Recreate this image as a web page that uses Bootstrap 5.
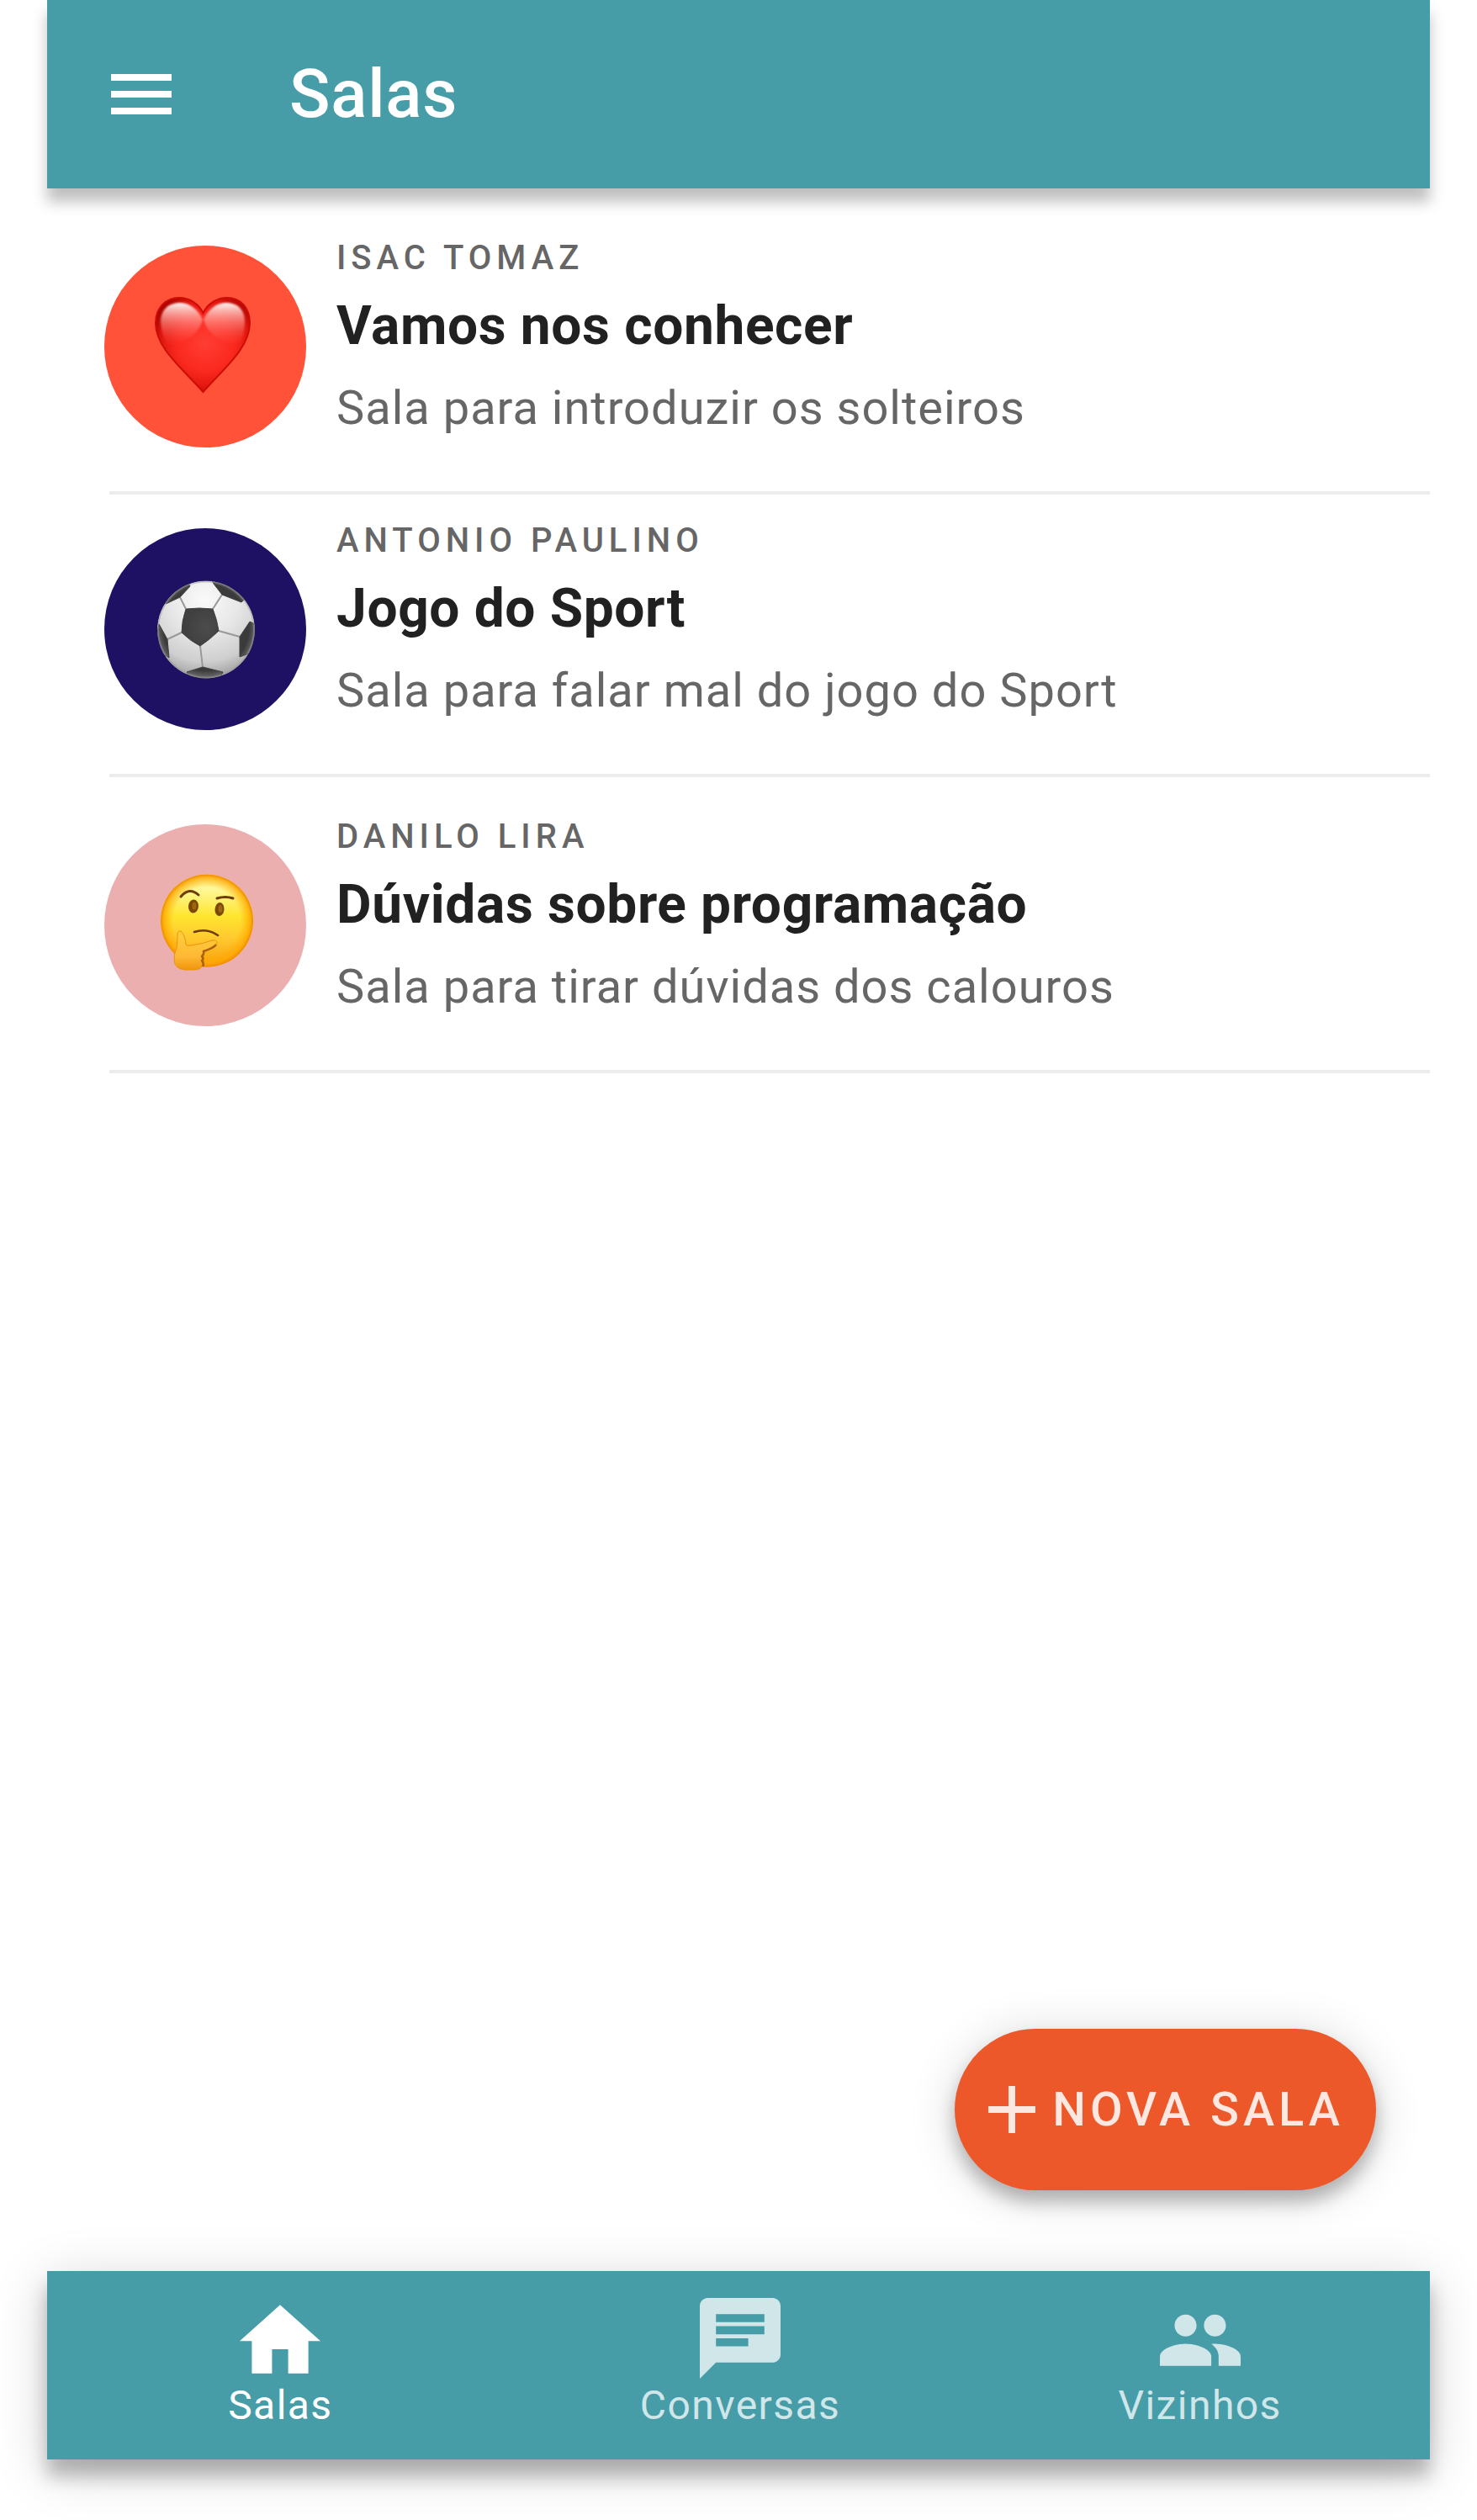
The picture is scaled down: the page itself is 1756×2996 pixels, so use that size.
<!DOCTYPE html>
<html lang="pt-BR">
<head>
<meta charset="utf-8">
<meta name="viewport" content="width=device-width, initial-scale=1">
<title>Salas</title>
<link href="https://cdn.jsdelivr.net/npm/bootstrap@5.3.0/dist/css/bootstrap.min.css" rel="stylesheet">
<style>
  :root { --teal: #469da8; --coral: #ec5829; }
  body { font-family: Roboto, "Noto Sans", sans-serif; padding: 0 56px 72px; color: #212121; background: #fff; }
  svg { display: block; }
  .app-header { min-height: 224px; padding-left: 52px; background: var(--teal); box-shadow: 0 16px 16px rgba(0, 0, 0, .25); }
  .menu-button { width: 120px; height: 120px; }
  .app-title { margin-left: 116px; font-size: 80px; line-height: 96px; font-weight: 500; letter-spacing: .01em; }
  .room-list { padding-top: 28px; }
  .room { gap: 36px; padding: 32px 0 52px 68px; }
  .room-spaced { padding-top: 48px; }
  .avatar { width: 240px; height: 240px; margin-top: 8px; overflow: hidden; }
  .avatar-heart { background: #ff5238; }
  .avatar-ball { background: #1e1163; }
  .avatar-think { background: #ebafb0; }
  .room-text { gap: 14px; }
  .room-owner { font-size: 40px; line-height: 46px; font-weight: 500; letter-spacing: 6px; color: #666; }
  .room-name { font-size: 64px; line-height: 88px; font-weight: 700; letter-spacing: .01em; }
  .room-about { font-size: 56px; line-height: 78px; letter-spacing: 1px; color: #666; }
  .divider { margin: 0 0 0 74px; border-top: 4px solid #ececec; opacity: 1; }
  .new-room { height: 192px; margin: 0 64px 96px 0; padding: 0 38px 0 20px; background: var(--coral); color: #fde8e1; font-size: 56px; font-weight: 500; letter-spacing: 5px; box-shadow: 0 14px 20px rgba(0, 0, 0, .24), 0 6px 56px rgba(0, 0, 0, .16); }
  .new-room:hover { background: var(--coral); color: #fff; }
  .tab-bar { min-height: 224px; padding-left: 4px; background: var(--teal); box-shadow: 0 20px 20px rgba(0, 0, 0, .24), 0 12px 60px rgba(0, 0, 0, .18); }
  .tab { flex: 1 1 0; padding: 32px 0; color: #d0e6e9; font-size: 48px; line-height: 64px; letter-spacing: .03em; }
  .tab.active { color: #fff; }
</style>
</head>
<body class="d-flex flex-column min-vh-100">

<header class="app-header d-flex align-items-center text-white">
  <button type="button" class="menu-button btn p-0 border-0 text-white d-flex align-items-center justify-content-center" aria-label="Abrir menu">
    <svg width="72" height="48" viewBox="0 0 72 48" fill="currentColor" aria-hidden="true"><path d="M0 0h72v8H0zM0 20h72v8H0zM0 40h72v8H0z"/></svg>
  </button>
  <h1 class="app-title mb-0">Salas</h1>
</header>

<main class="flex-grow-1 d-flex flex-column">
  <div class="room-list">
    <article class="room d-flex">
      <div class="avatar avatar-heart rounded-circle flex-shrink-0">
        <svg width="240" height="240" viewBox="0 0 240 240" role="img" aria-label="Coração">
          <defs>
            <radialGradient id="heartBody" gradientUnits="userSpaceOnUse" cx="120" cy="116" r="66">
              <stop offset="0" stop-color="#ff3d33"/><stop offset=".5" stop-color="#fb2a20"/><stop offset=".8" stop-color="#e0160e"/><stop offset="1" stop-color="#a90500"/>
            </radialGradient>
            <linearGradient id="heartShine" x1="0" y1="0" x2="0" y2="1">
              <stop offset="0" stop-color="#fff" stop-opacity=".95"/><stop offset=".25" stop-color="#ffc6c0" stop-opacity=".75"/><stop offset="1" stop-color="#ff4b3f" stop-opacity="0"/>
            </linearGradient>
            <filter id="soften" x="-20%" y="-20%" width="140%" height="140%"><feGaussianBlur stdDeviation="1"/></filter>
          </defs>
          <path d="M117.500 80C112 69 101 62 89 62C73 62 61 74 61 92C61 122 94 147 117.500 174C141 147 173 122 173 92C173 74 162 62 146 62C134 62 123 69 117.500 80Z" fill="url(#heartBody)" stroke="#cc0c05" stroke-width="2"/>
          <path d="M117 88C111 75 101 68 90 68C76 68 67 77 67 91Q68 108 77 120Q112 110 117 88Z" fill="url(#heartShine)" filter="url(#soften)"/>
          <path d="M118 88C124 75 134 68 145 68C159 68 167 77 167 91Q167 108 158 120Q123 110 118 88Z" fill="url(#heartShine)" filter="url(#soften)"/>
        </svg>
      </div>
      <div class="room-text d-flex flex-column">
        <p class="room-owner mb-0">ISAC TOMAZ</p>
        <h2 class="room-name mb-0">Vamos nos conhecer</h2>
        <p class="room-about mb-0">Sala para introduzir os solteiros</p>
      </div>
    </article>
    <hr class="divider">

    <article class="room d-flex">
      <div class="avatar avatar-ball rounded-circle flex-shrink-0">
        <svg width="240" height="240" viewBox="0 0 240 240" role="img" aria-label="Bola de futebol">
          <defs>
            <radialGradient id="ballBody" gradientUnits="userSpaceOnUse" cx="119" cy="85" r="98">
              <stop offset="0" stop-color="#fafafa"/><stop offset=".4" stop-color="#e8e8e8"/><stop offset=".75" stop-color="#cfcfcf"/><stop offset="1" stop-color="#969696"/>
            </radialGradient>
            <radialGradient id="patch" gradientUnits="userSpaceOnUse" cx="121" cy="118" r="60">
              <stop offset="0" stop-color="#4c4c4c"/><stop offset=".4" stop-color="#404040"/><stop offset=".85" stop-color="#3a3a3a"/><stop offset="1" stop-color="#6d6d6d"/>
            </radialGradient>
            <clipPath id="ballClip"><circle cx="121" cy="120.500" r="58"/></clipPath>
          </defs>
          <g clip-path="url(#ballClip)">
            <circle cx="121" cy="120.500" r="58" fill="url(#ballBody)"/>
            <g fill="none" stroke="#999" stroke-width="2">
              <path d="M97 96L90 82M129 96L140 79M136 122L161 129M114 140L117 165M92 124L75 132"/>
            </g>
            <g fill="url(#patch)" stroke="#404040" stroke-width="1" stroke-linejoin="round">
              <path d="M97 96Q113 94 129 96Q134 108 136 122Q126 132 114 140Q102 134 92 124Q92 110 97 96Z"/>
              <path d="M102 69L90 82L73 90L66 70L95 54Z"/>
              <path d="M130 66L140 79L163 88L176 76L144 54L127 60Z"/>
              <path d="M173 111L161 129V153L180 146L185 117Z"/>
              <path d="M98 171L117 165L141 171L134 186H106Z"/>
              <path d="M65 114L75 132L77 154L59 144Z"/>
            </g>
            <circle cx="121" cy="120.500" r="57" fill="none" stroke="#999" stroke-opacity=".5" stroke-width="2"/>
          </g>
        </svg>
      </div>
      <div class="room-text d-flex flex-column">
        <p class="room-owner mb-0">ANTONIO PAULINO</p>
        <h2 class="room-name mb-0">Jogo do Sport</h2>
        <p class="room-about mb-0">Sala para falar mal do jogo do Sport</p>
      </div>
    </article>
    <hr class="divider">

    <article class="room room-spaced d-flex">
      <div class="avatar avatar-think rounded-circle flex-shrink-0">
        <svg width="240" height="240" viewBox="0 0 240 240" role="img" aria-label="Rosto pensativo">
          <defs>
            <linearGradient id="faceBody" x1="0" y1="0" x2="0" y2="1">
              <stop offset="0" stop-color="#fff7a0"/><stop offset=".15" stop-color="#fff89a"/><stop offset=".45" stop-color="#ffe530"/><stop offset=".7" stop-color="#ffc82e"/><stop offset="1" stop-color="#f79c0c"/>
            </linearGradient>
            <radialGradient id="faceRim" cx=".5" cy=".5" r=".5">
              <stop offset=".72" stop-color="#ffb000" stop-opacity="0"/><stop offset=".92" stop-color="#ffa800" stop-opacity=".75"/><stop offset="1" stop-color="#ee8a00"/>
            </radialGradient>
            <linearGradient id="handBody" x1="0" y1="0" x2="0" y2="1">
              <stop offset="0" stop-color="#ffcf3d"/><stop offset=".65" stop-color="#ffb935"/><stop offset="1" stop-color="#f0940c"/>
            </linearGradient>
          </defs>
          <circle cx="122" cy="114.500" r="55" fill="url(#faceBody)"/>
          <circle cx="122" cy="114.500" r="55" fill="url(#faceRim)"/>
          <g fill="none" stroke="#6e3a06" stroke-linecap="round">
            <path d="M91 86Q101 74 112 84" stroke-width="3"/>
            <path d="M134 88Q144 85 153 88" stroke-width="3"/>
            <path d="M107 128Q122 123 135 132" stroke-width="2.500"/>
          </g>
          <g fill="#7c4700">
            <ellipse cx="106" cy="97.500" rx="6" ry="8" transform="rotate(5 106 97)"/>
            <ellipse cx="137" cy="101" rx="5.500" ry="8" transform="rotate(5 137 101)"/>
          </g>
          <g fill="#9c6712"><ellipse cx="107" cy="97" rx="2.500" ry="4.500"/><ellipse cx="138" cy="100.500" rx="2.500" ry="4.500"/></g>
          <path d="M87 134Q86 126 91 127Q96 131 97 143Q98 145 103 144Q118 142 128 138Q134 137 134 141Q133 145 127 147L117 151L119 155L116 159L119 163L116 168Q116 173 105 173H96Q84 172 83 162Q83 153 86 147Z" fill="url(#handBody)" stroke="#e9930f" stroke-width="1"/>
          <path d="M133 143Q130 147 118 151Q119 154 116 157Q119 160 116 162Q119 166 117 169" fill="none" stroke="#a9600c" stroke-width="2.500" stroke-linejoin="round"/>
        </svg>
      </div>
      <div class="room-text d-flex flex-column">
        <p class="room-owner mb-0">DANILO LIRA</p>
        <h2 class="room-name mb-0">Dúvidas sobre programação</h2>
        <p class="room-about mb-0">Sala para tirar dúvidas dos calouros</p>
      </div>
    </article>
    <hr class="divider">
  </div>

  <button type="button" class="new-room btn border-0 rounded-pill d-flex align-items-center mt-auto align-self-end">
    <svg width="96" height="96" viewBox="0 0 96 96" fill="currentColor" aria-hidden="true"><path d="M44 20h8v24h24v8H52v24h-8V52H20v-8h24z"/></svg>
    NOVA SALA
  </button>
</main>

<nav class="tab-bar d-flex" aria-label="Navegação principal">
  <a href="#salas" class="tab active d-flex flex-column align-items-center text-decoration-none" aria-current="page">
    <svg width="96" height="96" viewBox="2 1.300 20 20" fill="currentColor" aria-hidden="true"><path d="M10 20v-6h4v6h5v-8h3L12 3 2 12h3v8z"/></svg>
    Salas
  </a>
  <a href="#conversas" class="tab d-flex flex-column align-items-center text-decoration-none">
    <svg width="96" height="96" viewBox="2 2 20 20" fill="currentColor" aria-hidden="true"><path d="M20 2H4c-1.100 0-2 .9-2 2v18l4-4h14c1.100 0 2-.9 2-2V4c0-1.100-.9-2-2-2zM6 6h12v2H6zm0 3h12v2H6zm0 3h8v2H6z" fill-rule="evenodd"/></svg>
    Conversas
  </a>
  <a href="#vizinhos" class="tab d-flex flex-column align-items-center text-decoration-none">
    <svg width="96" height="96" viewBox="1 .5 22 22" fill="currentColor" aria-hidden="true"><path d="M16 11c1.660 0 2.990-1.340 2.990-3S17.660 5 16 5s-3 1.340-3 3 1.340 3 3 3zm-8 0c1.660 0 2.990-1.340 2.990-3S9.660 5 8 5 5 6.340 5 8s1.340 3 3 3zm0 2c-2.330 0-7 1.170-7 3.500V19h14v-2.500c0-2.330-4.670-3.500-7-3.500zm8 0c-.29 0-.62.020-.97.050 1.160.84 1.970 1.970 1.970 3.450V19h6v-2.500c0-2.330-4.670-3.500-7-3.500z"/></svg>
    Vizinhos
  </a>
</nav>

<script src="https://cdn.jsdelivr.net/npm/bootstrap@5.3.0/dist/js/bootstrap.bundle.min.js"></script>
</body>
</html>
